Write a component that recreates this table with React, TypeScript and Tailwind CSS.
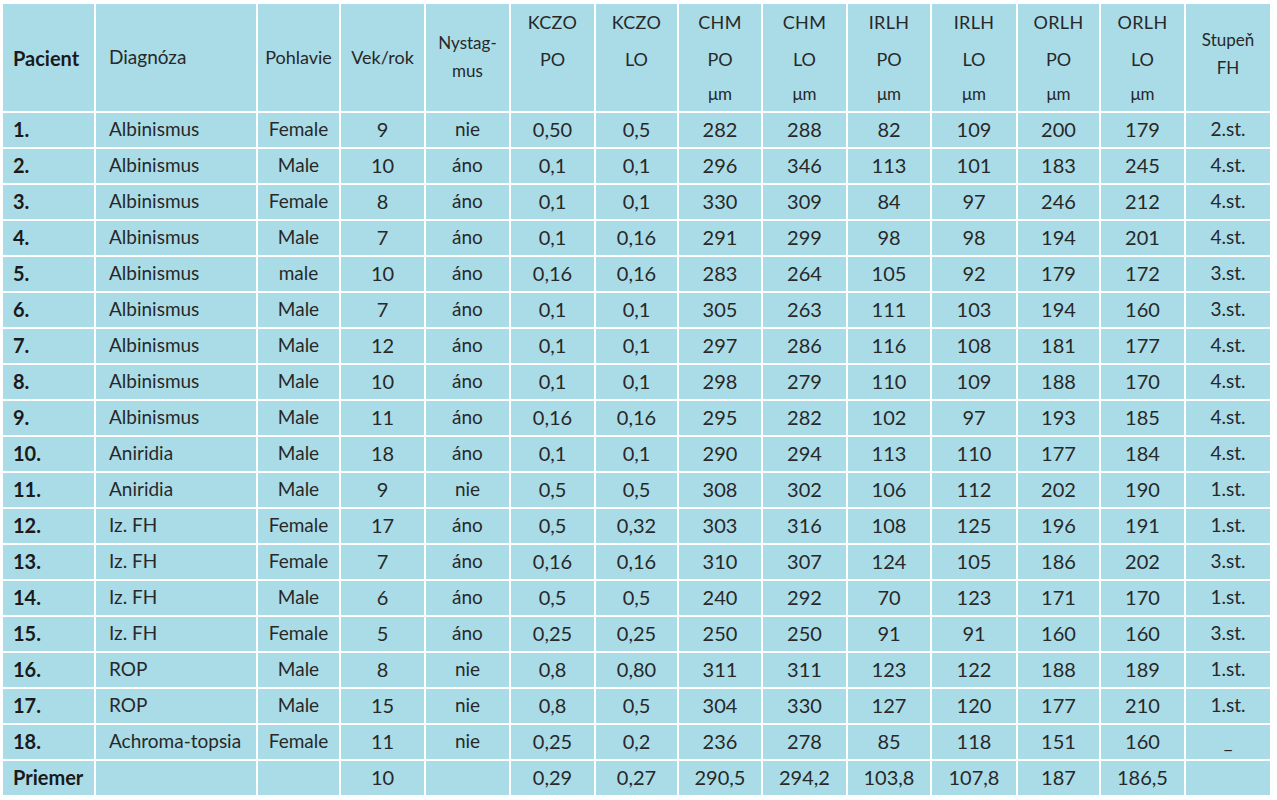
const ROWS: string[][] = [
  ["1.", "Albinismus", "Female", "9", "nie", "0,50", "0,5", "282", "288", "82", "109", "200", "179", "2.st."],
  ["2.", "Albinismus", "Male", "10", "áno", "0,1", "0,1", "296", "346", "113", "101", "183", "245", "4.st."],
  ["3.", "Albinismus", "Female", "8", "áno", "0,1", "0,1", "330", "309", "84", "97", "246", "212", "4.st."],
  ["4.", "Albinismus", "Male", "7", "áno", "0,1", "0,16", "291", "299", "98", "98", "194", "201", "4.st."],
  ["5.", "Albinismus", "male", "10", "áno", "0,16", "0,16", "283", "264", "105", "92", "179", "172", "3.st."],
  ["6.", "Albinismus", "Male", "7", "áno", "0,1", "0,1", "305", "263", "111", "103", "194", "160", "3.st."],
  ["7.", "Albinismus", "Male", "12", "áno", "0,1", "0,1", "297", "286", "116", "108", "181", "177", "4.st."],
  ["8.", "Albinismus", "Male", "10", "áno", "0,1", "0,1", "298", "279", "110", "109", "188", "170", "4.st."],
  ["9.", "Albinismus", "Male", "11", "áno", "0,16", "0,16", "295", "282", "102", "97", "193", "185", "4.st."],
  ["10.", "Aniridia", "Male", "18", "áno", "0,1", "0,1", "290", "294", "113", "110", "177", "184", "4.st."],
  ["11.", "Aniridia", "Male", "9", "nie", "0,5", "0,5", "308", "302", "106", "112", "202", "190", "1.st."],
  ["12.", "Iz. FH", "Female", "17", "áno", "0,5", "0,32", "303", "316", "108", "125", "196", "191", "1.st."],
  ["13.", "Iz. FH", "Female", "7", "áno", "0,16", "0,16", "310", "307", "124", "105", "186", "202", "3.st."],
  ["14.", "Iz. FH", "Male", "6", "áno", "0,5", "0,5", "240", "292", "70", "123", "171", "170", "1.st."],
  ["15.", "Iz. FH", "Female", "5", "áno", "0,25", "0,25", "250", "250", "91", "91", "160", "160", "3.st."],
  ["16.", "ROP", "Male", "8", "nie", "0,8", "0,80", "311", "311", "123", "122", "188", "189", "1.st."],
  ["17.", "ROP", "Male", "15", "nie", "0,8", "0,5", "304", "330", "127", "120", "177", "210", "1.st."],
  ["18.", "Achroma-topsia", "Female", "11", "nie", "0,25", "0,2", "236", "278", "85", "118", "151", "160", "_"],
  ["Priemer", "", "", "10", "", "0,29", "0,27", "290,5", "294,2", "103,8", "107,8", "187", "186,5", ""],
];

// measurement columns: [name, eye, unit]
const MEASURES: [string, string, string][] = [
  ["KCZO", "PO", ""],
  ["KCZO", "LO", ""],
  ["CHM", "PO", "μm"],
  ["CHM", "LO", "μm"],
  ["IRLH", "PO", "μm"],
  ["IRLH", "LO", "μm"],
  ["ORLH", "PO", "μm"],
  ["ORLH", "LO", "μm"],
];

const cell = "bg-[#aadce8] flex items-center h-[34px] pb-[2px]";

function MeasureHead({ name, eye, unit }: { name: string; eye: string; unit: string }) {
  return (
    <div className="bg-[#aadce8] flex flex-col items-center">
      <span className="h-[37px] leading-[37px] text-[18px] tracking-[0.3px]">{name}</span>
      <span className="h-[37px] leading-[37px] text-[18px]">{eye}</span>
      <span className="h-[32px] leading-[32px] text-[17px]">{unit}</span>
    </div>
  );
}

export default function App() {
  return (
    <div className="bg-white min-h-screen pl-[3px] pt-[4px] text-[#282828] font-['Lato','Liberation_Sans',sans-serif]">
      <div className="grid w-[1267px] gap-[2px] bg-white grid-cols-[91px_160px_81px_83px_83px_83px_81px_82px_83px_82px_84px_81px_83px_84px] grid-rows-[107px]">
        <div className="bg-[#aadce8] flex items-center pl-[10px] font-bold text-[20px] text-[#1a1a1a]">Pacient</div>
        <div className="bg-[#aadce8] flex items-center pl-[13px] text-[19px]">Diagnóza</div>
        <div className="bg-[#aadce8] flex items-center justify-center text-[18px]">Pohlavie</div>
        <div className="bg-[#aadce8] flex items-center justify-center text-[18px]">Vek/rok</div>
        <div className="bg-[#aadce8] flex flex-col items-center justify-center text-[17px] leading-[28px] pb-[1px]">
          <span>Nystag-</span>
          <span>mus</span>
        </div>
        {MEASURES.map((m, i) => (
          <MeasureHead key={i} name={m[0]} eye={m[1]} unit={m[2]} />
        ))}
        <div className="bg-[#aadce8] flex flex-col items-center justify-center text-[17px] leading-[28px] pb-[8px]">
          <span>Stupeň</span>
          <span>FH</span>
        </div>

        {ROWS.map((r, ri) =>
          r.map((v, ci) => {
            if (ci === 0)
              return (
                <div key={ri + "-" + ci} className={cell + " pl-[10px] font-bold text-[20px] text-[#1a1a1a]"}>
                  {v}
                </div>
              );
            if (ci === 1)
              return (
                <div key={ri + "-" + ci} className={cell + " pl-[13px] text-[19px]"}>
                  {v}
                </div>
              );
            if (ci === 2 || ci === 4 || ci === 13)
              return (
                <div key={ri + "-" + ci} className={cell + " justify-center text-[19px]"}>
                  {v}
                </div>
              );
            return (
              <div key={ri + "-" + ci} className={cell + " justify-center text-[20px]"}>
                {v}
              </div>
            );
          })
        )}
      </div>
    </div>
  );
}
